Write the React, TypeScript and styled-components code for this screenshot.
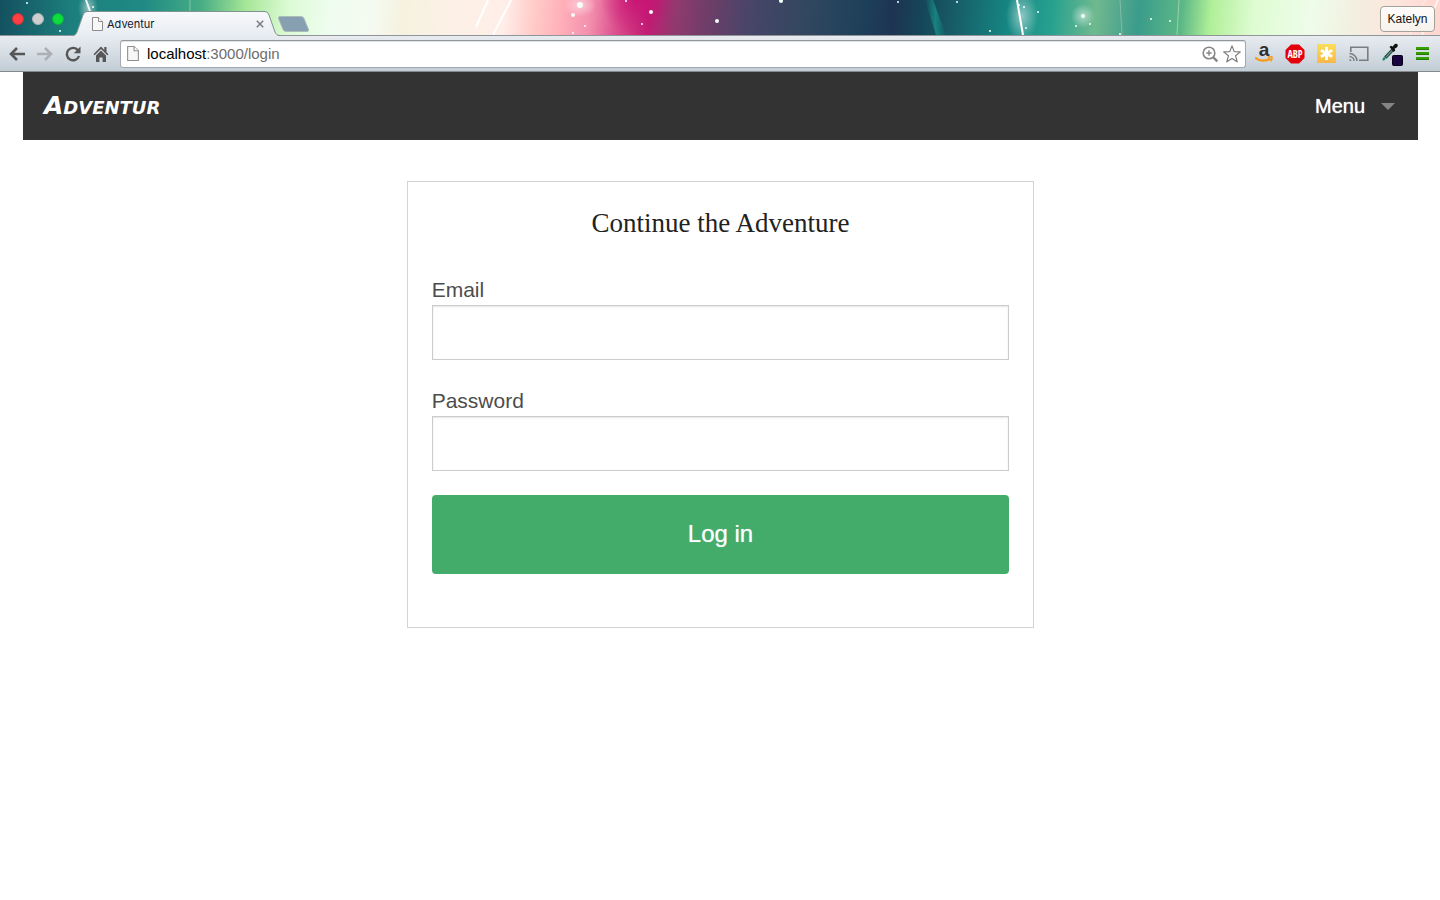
import React from "react";
import styled, { createGlobalStyle } from "styled-components";

const GlobalStyle = createGlobalStyle`
  *, *::before, *::after { box-sizing: border-box; }
  body {
    margin: 0;
    background: #fff;
    font-family: "Liberation Sans", Helvetica, Arial, sans-serif;
  }
`;

/* ---------- browser window ---------- */

const TabStrip = styled.header`
  position: relative;
  display: flex;
  align-items: flex-end;
  height: 36px;
  padding: 0 5px 0 12px;
  border-bottom: 1px solid #8f9599;
  background: linear-gradient(
    95deg,
    #14505f 0%,
    #1c7f7d 5%,
    #1f8a84 10%,
    #48ad84 14%,
    #a5e596 17%,
    #dcfbd4 20%,
    #effdf0 23%,
    #f5faf0 26%,
    #f5f2e0 28%,
    #fcf1e6 31%,
    #ffeee8 35%,
    #ffcdca 37%,
    #ffb0b9 39%,
    #f38fae 41%,
    #d94a8b 43%,
    #c21d73 45%,
    #8f3a6f 47%,
    #703d68 49%,
    #484568 52%,
    #31475f 56%,
    #1d3f5a 60%,
    #1e3452 62%,
    #154659 64%,
    #175a65 66%,
    #168783 70%,
    #27a18f 73%,
    #6fb98e 76%,
    #5fae8e 77%,
    #3a9c8b 79%,
    #5db886 82%,
    #b0ef98 84%,
    #dffcd2 87%,
    #effcea 91%,
    #f3efe0 94%,
    #fde5dc 97%,
    #ffd5cf 100%
  );
`;

const Aurora = styled.svg`
  position: absolute;
  inset: 0;
  width: 100%;
  height: 35px;
`;

const Lights = styled.div`
  position: relative;
  display: flex;
  gap: 8px;
  align-self: center;
  margin-top: 3px;
`;

const Light = styled.button<{ $fill: string; $edge: string }>`
  width: 12px;
  height: 12px;
  padding: 0;
  border: 1px solid ${(p) => p.$edge};
  border-radius: 50%;
  background: ${(p) => p.$fill};
`;

const Tab = styled.div`
  position: relative;
  display: flex;
  align-items: center;
  width: 208px;
  height: 25px;
  margin: 0 0 -1px 8px;
  padding: 0 16px 0 20px;
  color: #10182c;
  font: 11px/24px Inter, sans-serif;
`;

const TabShape = styled.svg`
  position: absolute;
  inset: 0;
`;

const TabTitle = styled.span`
  position: relative;
  flex: 1;
  margin-left: 4px;
`;

const PlainButton = styled.button`
  position: relative;
  display: flex;
  align-items: center;
  justify-content: center;
  padding: 0;
  border: 0;
  background: none;
`;

const NewTab = styled(PlainButton)`
  margin: 0 0 2px -4px;
`;

const Profile = styled.button`
  position: relative;
  width: 55px;
  height: 26px;
  margin: 0 0 3px auto;
  padding: 0;
  border: 1px solid #a3a19a;
  border-radius: 4px;
  background: linear-gradient(#fffdfb, #f7f2ec);
  color: #111;
  font: 12px/24px "Liberation Sans", Arial, sans-serif;
`;

const Toolbar = styled.div`
  display: flex;
  align-items: center;
  height: 36px;
  padding: 0 10px 0 9px;
  border-bottom: 1px solid #85898d;
  background: linear-gradient(#e8ecf1, #c3cdd6);
`;

const NavButtons = styled.div`
  display: flex;
  gap: 12px;
  margin-right: 11px;
`;

const Omnibox = styled.div`
  display: flex;
  flex: 1;
  align-items: center;
  gap: 4px;
  height: 28px;
  padding: 0 4px 0 6px;
  border: 1px solid #a4a9af;
  border-top-color: #92979c;
  border-radius: 3px;
  background: #fff;
  box-shadow: inset 0 1px 0 #e0e2e4;
`;

const Address = styled.p`
  flex: 1;
  margin: 0 0 0 4px;
  color: #6d6d6d;
  font-size: 15px;
  line-height: 20px;
`;

const Host = styled.span`
  color: #000;
`;

const Extensions = styled.div`
  display: flex;
  align-items: center;
  gap: 12px;
  margin-left: 9px;
`;

/* ---------- site ---------- */

const Site = styled.div`
  padding: 0 22px 0 23px;
`;

const TopBar = styled.nav`
  display: flex;
  align-items: center;
  justify-content: space-between;
  height: 68px;
  padding: 0 23px 0 21px;
  background: #333;
`;

const Brand = styled.a`
  color: #fff;
  font: italic bold 25px/32px "DejaVu Sans", sans-serif;
  font-variant-caps: small-caps;
  text-decoration: none;
`;

const MenuButton = styled.button`
  display: flex;
  align-items: center;
  gap: 16px;
  padding: 0;
  border: 0;
  background: none;
  color: #fff;
  font: 20px/24px "Liberation Sans", Helvetica, sans-serif;
  text-shadow: 0 0 1px #fff;
`;

const Caret = styled.span`
  border: 7px solid transparent;
  border-top-color: #858585;
  border-bottom: 0;
`;

const Card = styled.form`
  width: 45%;
  margin: 41px auto 0;
  padding: 24px 24px 53px;
  border: 1px solid #d3d3d3;
`;

const Title = styled.h1`
  margin: 0 0 33px;
  color: #222;
  font: 27px/34px "Liberation Serif", Palatino, serif;
  text-align: center;
`;

const Field = styled.label`
  display: block;
  margin-bottom: 24px;
  padding-top: 4px;
  color: #4d4d4d;
  font-size: 21px;
  line-height: 26px;
`;

const TextBox = styled.input`
  display: block;
  width: 100%;
  height: 55px;
  margin-top: 2px;
  padding: 8px 12px;
  border: 1px solid #ccc;
  background: #fff;
  box-shadow: inset 0 1px 2px rgba(0, 0, 0, 0.1);
  font: 21px "Liberation Sans", Helvetica, sans-serif;
`;

const Submit = styled.button`
  display: block;
  width: 100%;
  height: 79px;
  padding: 0 0 2px;
  border: 0;
  border-radius: 4px;
  background: #43ac6a;
  color: #fff;
  font: 24px/28px "Liberation Sans", Helvetica, sans-serif;
  text-shadow: 0 0 1px rgba(255, 255, 255, 0.6);
`;

/* ---------- drawings ---------- */

const stars: [number, number, number][] = [
  [27, 3, 1], [60, 31, 1], [93, 7, 1], [580, 5, 3], [573, 15, 2], [573, 33, 1], [585, 26, 1],
  [651, 12, 2], [642, 24, 1], [626, 1, 1], [717, 21, 2], [781, 1, 2], [898, 2, 1], [957, 2, 1],
  [990, 31, 1], [1019, 5, 1], [1024, 7, 1], [1026, 28, 1], [1038, 12, 1], [1083, 16, 2],
  [1076, 26, 1], [1090, 24, 1], [1151, 19, 1], [1170, 21, 1], [1120, 34, 1],
];

const rays: [string, number, number][] = [
  ["M476 27 488 0", 2, 1],
  ["M493 35 511 0", 2, 1],
  ["M1017 0 1023 35", 2, 1],
  ["M86 0 91 14", 2, 0.9],
  ["M190 0v12", 1, 0.35],
  ["M1120 0 1122 35", 1, 0.25],
  ["M1179 0 1177 35", 1, 0.35],
  ["M1438 0 1422 35", 2, 0.7],
  ["M1425 0 1410 35", 1, 0.4],
];

const Wallpaper = () => (
  <Aurora viewBox="0 0 1440 35" preserveAspectRatio="none" aria-hidden="true">
    <defs>
      <radialGradient id="glow">
        <stop offset="0" stopColor="#fff" stopOpacity="0.5" />
        <stop offset="1" stopColor="#fff" stopOpacity="0" />
      </radialGradient>
      <radialGradient id="magenta">
        <stop offset="0" stopColor="#c80f74" stopOpacity="0.8" />
        <stop offset="1" stopColor="#c80f74" stopOpacity="0" />
      </radialGradient>
      <linearGradient id="beam" x1="0" y1="0" x2="1" y2="0">
        <stop offset="0" stopColor="#18b59b" stopOpacity="0" />
        <stop offset="0.5" stopColor="#18b59b" stopOpacity="0.5" />
        <stop offset="1" stopColor="#18b59b" stopOpacity="0" />
      </linearGradient>
    </defs>
    <ellipse cx="636" cy="0" rx="36" ry="34" fill="url(#magenta)" />
    <path d="M925 0h8l13 35h-10z" fill="url(#beam)" />
    <ellipse cx="580" cy="5" rx="16" ry="12" fill="url(#glow)" />
    <ellipse cx="1022" cy="16" rx="16" ry="26" fill="url(#glow)" />
    <ellipse cx="1083" cy="16" rx="12" ry="12" fill="url(#glow)" />
    <ellipse cx="88" cy="8" rx="10" ry="16" fill="url(#glow)" />
    {rays.map(([d, w, o]) => (
      <path key={d} d={d} stroke="#fff" strokeWidth={w} opacity={o} />
    ))}
    {stars.map(([x, y, r]) => (
      <circle key={`${x}-${y}`} cx={x} cy={y} r={r} fill="#f4fffb" />
    ))}
  </Aurora>
);

const PageSvg = styled.svg`
  position: relative;
`;

const PageIcon = ({ size = 14 }: { size?: number }) => (
  <PageSvg width={size - 3} height={size} viewBox="0 0 11 14" aria-hidden="true">
    <path d="M.5.5h6l4 4v9H.5z" fill="#f8f8f8" stroke="#8d8d8d" />
    <path d="M6.500.500v4h4" fill="#fff" stroke="#8d8d8d" />
  </PageSvg>
);

const Arrow = ({ color, flip }: { color: string; flip?: boolean }) => (
  <svg width="16" height="16" viewBox="0 0 16 16" aria-hidden="true">
    <path
      d={flip ? "M0 8h14M8 2l6 6-6 6" : "M16 8H2M8 2 2 8l6 6"}
      fill="none"
      stroke={color}
      strokeWidth="2.600"
    />
  </svg>
);

const Reload = () => (
  <svg width="16" height="16" viewBox="0 0 16 16" aria-hidden="true">
    <path d="M13 4.300A6.200 6.200 0 1 0 14 10" fill="none" stroke="#565656" strokeWidth="2.400" />
    <path d="M15.500.500v6.700H8.800z" fill="#565656" />
  </svg>
);

const Home = () => (
  <svg width="16" height="16" viewBox="0 0 16 16" aria-hidden="true">
    <path d="M8 .5.500 8.300l1.200 1L8 3l6.300 6.300 1.200-1-2-2.100V1h-2.200v3z" fill="#565656" />
    <path d="M3 9.400 8 4.500l5 4.900V16H9.600v-4.500H6.400V16H3z" fill="#565656" />
  </svg>
);

const ZoomIcon = () => (
  <svg width="18" height="18" viewBox="0 0 18 18" fill="none" stroke="#868686" aria-hidden="true">
    <circle cx="8" cy="8" r="5.800" strokeWidth="1.600" />
    <path d="M8 5.300v5.400M5.300 8h5.400" strokeWidth="1.400" />
    <path d="m12.300 12.300 4 4" strokeWidth="2.400" />
  </svg>
);

const Star = () => (
  <svg width="18" height="18" viewBox="0 0 18 18" aria-hidden="true">
    <path
      d="m9 .9 2.200 5.700 6.100.3-4.700 3.900 1.600 6L9 13.400l-5.200 3.400 1.600-6L.7 6.900l6.100-.3z"
      fill="#fff"
      stroke="#7d7d7d"
      strokeWidth="1.200"
      strokeLinejoin="round"
    />
  </svg>
);

const Amazon = () => (
  <svg width="18" height="34" viewBox="0 -7 18 34" aria-hidden="true">
    <text x="9" y="12" textAnchor="middle" fill="#2f2f2f" fontFamily="Liberation Sans, sans-serif" fontWeight="700" fontSize="19">
      a
    </text>
    <path d="M0 13.500c4.500 4 11 4.200 15.500 1" fill="none" stroke="#f79a1c" strokeWidth="2.200" />
    <path d="M12.800 13.200c1.500-.7 3-.7 4.200-.2.200 1.500-.3 3-1.500 4.400" fill="none" stroke="#f79a1c" strokeWidth="1.500" />
  </svg>
);

const AdBlock = () => (
  <svg width="20" height="20" viewBox="0 0 20 20" aria-hidden="true">
    <path d="M6 .5h8L19.500 6v8L14 19.500H6L.5 14V6z" fill="#e4000b" />
    <text x="10" y="14" textAnchor="middle" fill="#fff" fontFamily="Open Sans Condensed, sans-serif" fontWeight="700" fontSize="10">
      ABP
    </text>
  </svg>
);

const Asterisk = () => (
  <svg width="20" height="20" viewBox="0 0 20 20" aria-hidden="true">
    <defs>
      <linearGradient id="amber" x1="0" y1="0" x2="0" y2="1">
        <stop offset="0" stopColor="#f9de5c" />
        <stop offset="1" stopColor="#fbb849" />
      </linearGradient>
    </defs>
    <path d="M0 0h19v19H0z" fill="url(#amber)" />
    <path d="M9.500 3v13M3.900 6.300l11.200 6.400M3.900 12.700l11.200-6.400" stroke="#fff" strokeWidth="3" />
  </svg>
);

const Cast = () => (
  <svg width="20" height="20" viewBox="0 0 20 20" fill="none" stroke="#7b7d80" aria-hidden="true">
    <path d="M1.800 8V3.200h17v13H10" strokeWidth="1.600" />
    <path d="M.5 9.500A7.500 7.500 0 0 1 8 17M.5 12.500A4.500 4.500 0 0 1 5 17" strokeWidth="1.500" />
    <path d="M.5 15a2 2 0 0 1 2 2h-2z" fill="#7b7d80" stroke="none" />
  </svg>
);

const Dropper = () => (
  <svg width="23" height="24" viewBox="0 0 23 24" aria-hidden="true">
    <path d="M4 14.500 10.500 7.500l1.500 1.500L5.500 16z" fill="#8fb3a8" stroke="#234f46" strokeWidth="1.200" />
    <path d="M1.800 18.500c-1-1.200.5-2.300 1.200-3.700l1.800 1.400c-.8 1.200-1.500 2.900-3 2.300z" fill="#168168" />
    <path d="M8.500 5 10 3.800l1.900.7c.8-1.700 2-2.900 3.500-2.700 1.500.3 1.900 2 .8 3.200-.7.800-1.600 1.200-2.500 1.600l.5 2-1.500 1.400z" fill="#111" />
    <rect x="11.500" y="13.500" width="10" height="10" rx="1" fill="#1a0440" stroke="#05001c" />
  </svg>
);

const Hamburger = () => (
  <svg width="14" height="20" viewBox="0 0 14 20" aria-hidden="true">
    <path d="M0 4.500h13M0 9.500h13M0 14.500h13" stroke="#35a000" strokeWidth="3" />
    <path d="M0 5.500h13M0 10.500h13M0 15.500h13" stroke="#247a00" />
  </svg>
);

const BrowserChrome = () => (
  <>
    <TabStrip>
      <Wallpaper />
      <Lights>
        <Light $fill="#fc4043" $edge="#c9323a" aria-label="Close window" />
        <Light $fill="#cfcfcf" $edge="#a9b3b1" aria-label="Minimize window" />
        <Light $fill="#0ddc3f" $edge="#0fae3c" aria-label="Full screen" />
      </Lights>
      <Tab>
        <TabShape width="208" height="25" viewBox="0 0 208 25" aria-hidden="true">
          <defs>
            <linearGradient id="tab" x1="0" y1="0" x2="0" y2="1">
              <stop offset="0" stopColor="#f8f9fb" />
              <stop offset="1" stopColor="#e8ecf1" />
            </linearGradient>
          </defs>
          <path d="M0 25C3 25 4 23 5 21L11 4Q12 1 15 1H193Q196 1 197 4L203 21C204 23 205 25 208 25z" fill="url(#tab)" />
          <path
            d="M0 24.500C3 24.500 4 23 5 21L11 4Q12 .5 15 .5H193Q196 .5 197 4L203 21C204 23 205 24.500 208 24.500"
            fill="none"
            stroke="#7f9392"
          />
        </TabShape>
        <PageIcon />
        <TabTitle>Adventur</TabTitle>
        <PlainButton aria-label="Close tab">
          <svg width="8" height="8" viewBox="0 0 8 8" aria-hidden="true">
            <path d="m.8.8 6.400 6.400M7.200.8.8 7.200" stroke="#7c7f83" strokeWidth="1.600" />
          </svg>
        </PlainButton>
      </Tab>
      <NewTab aria-label="New tab">
        <svg width="34" height="18" viewBox="0 0 34 18" aria-hidden="true">
          <path d="M4 1.500h21q2 0 3 2l4.500 11q.6 2-1.500 2H10q-2 0-3-2L2.500 3.500q-.5-2 1.500-2z" fill="#869fb1" stroke="#a9bdb9" />
        </svg>
      </NewTab>
      <Profile>Katelyn</Profile>
    </TabStrip>
    <Toolbar>
      <NavButtons>
        <PlainButton aria-label="Back"><Arrow color="#565656" /></PlainButton>
        <PlainButton aria-label="Forward"><Arrow color="#acb0b4" flip /></PlainButton>
        <PlainButton aria-label="Reload"><Reload /></PlainButton>
        <PlainButton aria-label="Home"><Home /></PlainButton>
      </NavButtons>
      <Omnibox>
        <PageIcon size={15} />
        <Address><Host>localhost</Host>:3000/login</Address>
        <PlainButton aria-label="Zoom"><ZoomIcon /></PlainButton>
        <PlainButton aria-label="Bookmark this page"><Star /></PlainButton>
      </Omnibox>
      <Extensions>
        <PlainButton aria-label="Amazon"><Amazon /></PlainButton>
        <PlainButton aria-label="Adblock Plus"><AdBlock /></PlainButton>
        <PlainButton aria-label="Notes"><Asterisk /></PlainButton>
        <PlainButton aria-label="Cast"><Cast /></PlainButton>
        <PlainButton aria-label="Colour picker"><Dropper /></PlainButton>
        <PlainButton aria-label="Browser menu"><Hamburger /></PlainButton>
      </Extensions>
    </Toolbar>
  </>
);

export default function App() {
  return (
    <>
      <GlobalStyle />
      <BrowserChrome />
      <Site>
        <TopBar>
          <Brand href="#">Adventur</Brand>
          <MenuButton>
            Menu
            <Caret />
          </MenuButton>
        </TopBar>
        <main>
          <Card onSubmit={(e: React.FormEvent) => e.preventDefault()}>
            <Title>Continue the Adventure</Title>
            <Field>
              Email
              <TextBox type="email" name="email" />
            </Field>
            <Field>
              Password
              <TextBox type="password" name="password" />
            </Field>
            <Submit type="submit">Log in</Submit>
          </Card>
        </main>
      </Site>
    </>
  );
}
